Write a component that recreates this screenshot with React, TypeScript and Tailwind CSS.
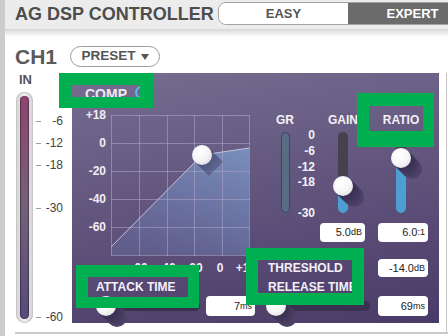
import React from "react";

const KNOB =
  "rounded-full bg-[radial-gradient(circle_at_40%_35%,#ffffff_0%,#f6f6f7_50%,#d6d6dd_100%)] shadow-[1px_1px_0_#3b3154,2px_2px_0_#3c3255,3px_3px_0_#3e3457,4px_4px_0_#40365a,5px_5px_0_#42385c,6px_6px_0_#443a5e,7px_7px_0_#463c60,8px_8px_0_#483e62,9px_9px_0_#4a4064,10px_10px_0_#4c4266,11px_11px_0_#4e4468]";

function VSlider({ pos }: { pos: number }) {
  return (
    <div className="relative w-[10px] h-[81px] rounded-full bg-[#47404f]">
      <div className="absolute inset-x-0 bottom-0 rounded-b-full bg-[#4d9fd1]" style={{ top: pos }} />
      <div className={`absolute left-[-5px] w-[20px] h-[20px] ${KNOB}`} style={{ top: pos - 10 }} />
    </div>
  );
}

function HSlider() {
  return (
    <div className="relative w-[104px] h-[10px] rounded-full bg-[#3a3050] shrink-0">
      <div className={`absolute left-0 top-[-5px] w-[20px] h-[20px] ${KNOB}`} />
    </div>
  );
}

function ValueBox({ value, unit, className }: { value: string; unit: string; className: string }) {
  return (
    <div className={`flex items-center justify-end rounded-[4px] bg-white pr-[3px] text-[#222] shrink-0 ${className}`}>
      <span className="text-[11px] leading-none">{value}</span>
      <span className="text-[9px] leading-none">{unit}</span>
    </div>
  );
}

function Chart() {
  const xs = [39.5, 67.5, 95.5, 122.5, 150.5, 177.5];
  const ys = [12.5, 40.5, 68.5, 96.5, 124.5, 152.5];
  const yl: [string, number][] = [["+18", 12], ["0", 40], ["-20", 68], ["-40", 96], ["-60", 124]];
  const xl: [string, number][] = [["-60", 67], ["-40", 95], ["-20", 122], ["0", 148], ["+18", 174]];
  return (
    <svg width="186" height="172" className="block shrink-0">
      <defs>
        <linearGradient id="cf" x1="1" y1="0" x2="0.3" y2="1">
          <stop offset="0" stopColor="#7c98c8" stopOpacity="0.85" />
          <stop offset="1" stopColor="#6b80b6" stopOpacity="0.3" />
        </linearGradient>
        <radialGradient id="kn" cx="0.4" cy="0.35" r="0.75">
          <stop offset="0" stopColor="#ffffff" />
          <stop offset="0.6" stopColor="#f4f4f6" />
          <stop offset="1" stopColor="#d5d5dc" />
        </radialGradient>
        <linearGradient id="sh" x1="0" y1="0" x2="1" y2="1">
          <stop offset="0" stopColor="#30264a" stopOpacity="0.75" />
          <stop offset="1" stopColor="#30264a" stopOpacity="0.15" />
        </linearGradient>
      </defs>
      <polygon points="39,144 130,52 177,45 177,152 39,152" fill="url(#cf)" />
      {xs.map((x) => (
        <line key={"x" + x} x1={x} x2={x} y1={12} y2={153} stroke="#aaa1c4" strokeOpacity={0.6} />
      ))}
      {ys.map((y) => (
        <line key={"y" + y} x1={39} x2={178} y1={y} y2={y} stroke="#aaa1c4" strokeOpacity={0.6} />
      ))}
      <polyline points="39,144 130,52 177,45" fill="none" stroke="#c6c2de" strokeWidth={1} />
      <polygon points="137,45 151,59 137,73 123,59" fill="url(#sh)" />
      <circle cx={130} cy={52} r={10} fill="url(#kn)" />
      {yl.map(([t, y]) => (
        <text key={t} x={34} y={y} textAnchor="end" dominantBaseline="central" fontSize={12} fontWeight="bold" fill="#f0eef6">
          {t}
        </text>
      ))}
      {xl.map(([t, x]) => (
        <text key={"b" + t} x={x} y={165} textAnchor="middle" dominantBaseline="central" fontSize={12} fontWeight="bold" fill="#f0eef6">
          {t}
        </text>
      ))}
    </svg>
  );
}

const inScale: [string, number][] = [["-6", 29], ["-12", 51], ["-18", 73], ["-30", 116], ["-60", 225]];
const grScale: [string, number][] = [["0", 135], ["-6", 151], ["-12", 167], ["-18", 182], ["-30", 213]];

export default function App() {
  return (
    <div className="relative w-[448px] h-[336px] overflow-hidden bg-white flex font-['Liberation_Sans',Arial,sans-serif]">
      <div className="w-[5px] shrink-0 bg-[#cccccc]" />
      <div className="flex flex-col w-[443px] shrink-0">
        {/* header */}
        <div className="h-[29px] bg-[#ececec] flex items-start shrink-0">
          <div className="w-[213px] shrink-0 h-[29px] pl-[10px] flex items-center text-[18px] font-bold text-[#4d4d4d] whitespace-nowrap">
            AG DSP CONTROLLER
          </div>
          <div className="mt-[2px] flex h-[23px] w-[260px] shrink-0 overflow-hidden rounded-l-[8px] border border-[#a3a3a3] text-[13px] font-bold">
            <div className="w-[129px] bg-white flex items-center justify-center text-[#555]">EASY</div>
            <div className="flex-1 bg-[#6b6b6b] flex items-center justify-center text-white">EXPERT</div>
          </div>
        </div>
        <div className="h-[8px] shrink-0 bg-gradient-to-b from-[#d7d7d7] to-white" />

        {/* CH1 row */}
        <div className="mt-[9px] h-[21px] flex items-center pl-[10px] shrink-0">
          <span className="text-[21px] font-bold text-[#5a5a5a] leading-none">CH1</span>
          <div className="ml-[13px] h-[21px] w-[90px] rounded-full border border-[#9c9c9c] flex items-center justify-center gap-[5px] text-[13.5px] font-bold text-[#555]">
            <span>PRESET</span>
            <svg width="8" height="6" viewBox="0 0 8 6">
              <polygon points="0,0 8,0 4,6" fill="#555" />
            </svg>
          </div>
        </div>

        {/* main row */}
        <div className="mt-[6px] flex h-[250px] items-start shrink-0">
          {/* IN meter */}
          <div className="w-[67px] shrink-0 flex flex-col">
            <div className="pl-[14px] h-[13px] text-[13px] leading-[13px] font-bold text-[#555]">IN</div>
            <div className="mt-[6px] flex">
              <div className="ml-[11px] w-[17px] h-[231px] rounded-full bg-gradient-to-r from-[#d2d2d2] via-[#efefef] to-[#d2d2d2] p-[4px] shadow-[inset_0_0_0_1px_#c6c6c6]">
                <div className="h-full w-full rounded-full bg-gradient-to-b from-[#8d4470] via-[#74607a] to-[#574a7b] shadow-[inset_1px_0_1px_rgba(0,0,0,0.35),inset_-1px_0_1px_rgba(0,0,0,0.35)]" />
              </div>
              <div className="relative ml-[3px] w-[28px] h-[231px]">
                {inScale.map(([label, c]) => (
                  <div key={label} className="absolute left-0 right-0 h-[14px] flex items-center" style={{ top: c - 7 }}>
                    <div className="w-[5px] h-px bg-[#9a9a9a]" />
                    <div className="flex-1 text-right text-[12px] text-[#444] pr-[1px]">{label}</div>
                  </div>
                ))}
              </div>
            </div>
          </div>

          {/* purple panel */}
          <div className="w-[367px] h-[250px] shrink-0 flex bg-[linear-gradient(170deg,#766d90_0%,#5e517a_55%,#4a3a67_100%)]">
            <div className="w-[186px] shrink-0 flex flex-col">
              <div className="h-[30px] flex items-start pl-[13px] pt-[14px] shrink-0">
                <span className="text-[14px] leading-[14px] font-bold text-[#ebe8f2]">COMP</span>
                <span className="ml-[8px] mt-[-1px] w-[13px] h-[13px] rounded-full border-2 border-[#5cb8f2]" />
              </div>
              <Chart />
              <div className="mt-[6px] pl-[24px] h-[12px] text-[12px] leading-[12px] font-bold text-[#f3f1f8] whitespace-nowrap">
                ATTACK TIME
              </div>
              <div className="mt-[3px] h-[20px] flex items-center pl-[24px]">
                <HSlider />
                <ValueBox value="7" unit="ms" className="ml-[6px] w-[49px] h-[20px]" />
              </div>
            </div>

            <div className="flex-1 flex flex-col">
              <div className="mt-[41px] flex items-start">
                <div className="ml-[12px] w-[30px] flex flex-col items-center">
                  <div className="h-[12px] text-[12px] leading-[12px] font-bold text-[#f3f1f8]">GR</div>
                  <div className="mt-[6px] w-[9px] h-[81px] rounded-full bg-[#586c84] border border-[#443f5f]" />
                </div>
                <div className="relative w-[15px] h-[99px]">
                  {grScale.map(([label, c]) => (
                    <div
                      key={label}
                      className="absolute right-0 h-[14px] flex items-center text-[12px] font-bold text-[#f3f1f8] whitespace-nowrap"
                      style={{ top: c - 114 - 7 }}
                    >
                      {label}
                    </div>
                  ))}
                </div>
                <div className="ml-[13px] w-[30px] flex flex-col items-center">
                  <div className="h-[12px] text-[12px] leading-[12px] font-bold text-[#f3f1f8]">GAIN</div>
                  <div className="mt-[6px]">
                    <VSlider pos={54} />
                  </div>
                </div>
                <div className="ml-[28px] w-[30px] flex flex-col items-center">
                  <div className="h-[12px] text-[12px] leading-[12px] font-bold text-[#f3f1f8]">RATIO</div>
                  <div className="mt-[6px]">
                    <VSlider pos={26} />
                  </div>
                </div>
              </div>

              <div className="mt-[10px] flex">
                <ValueBox value="5.0" unit="dB" className="ml-[62px] w-[45px] h-[19px]" />
                <ValueBox value="6.0" unit=":1" className="ml-[13px] w-[50px] h-[19px]" />
              </div>

              <div className="mt-[17px] h-[18px] flex items-center justify-between pl-[10px] pr-[11px]">
                <span className="text-[12px] leading-[12px] font-bold text-[#f3f1f8]">THRESHOLD</span>
                <ValueBox value="-14.0" unit="dB" className="w-[50px] h-[18px]" />
              </div>

              <div className="mt-[4px] pl-[10px] h-[12px] text-[12px] leading-[12px] font-bold text-[#f3f1f8] whitespace-nowrap">
                RELEASE TIME
              </div>

              <div className="mt-[3px] h-[20px] flex items-center pl-[8px]">
                <HSlider />
                <ValueBox value="69" unit="ms" className="ml-[8px] w-[50px] h-[20px]" />
              </div>
            </div>
          </div>

          <div className="ml-[7px] w-px h-[260px] bg-[#c4c4c4] shrink-0" />
        </div>

        <div className="mt-[9px] ml-[10px] h-[2px] bg-[#cacaca] shrink-0" />
      </div>

      {/* annotation frames */}
      <div className="absolute left-[59px] top-[73px] w-[94px] h-[35px] border-[#00b050] border-t-[12px] border-l-[13px] border-r-[13px] border-b-[11px]" />
      <div className="absolute left-[357px] top-[93px] w-[77px] h-[54px] border-[#00b050] border-t-[13px] border-l-[12px] border-r-[11px] border-b-[16px]" />
      <div className="absolute left-[76px] top-[265px] w-[123px] h-[43px] border-[#00b050] border-t-[12px] border-l-[12px] border-r-[11px] border-b-[11px]" />
      <div className="absolute left-[246px] top-[248px] w-[118px] h-[57px] border-[#00b050] border-[12px]" />
    </div>
  );
}
